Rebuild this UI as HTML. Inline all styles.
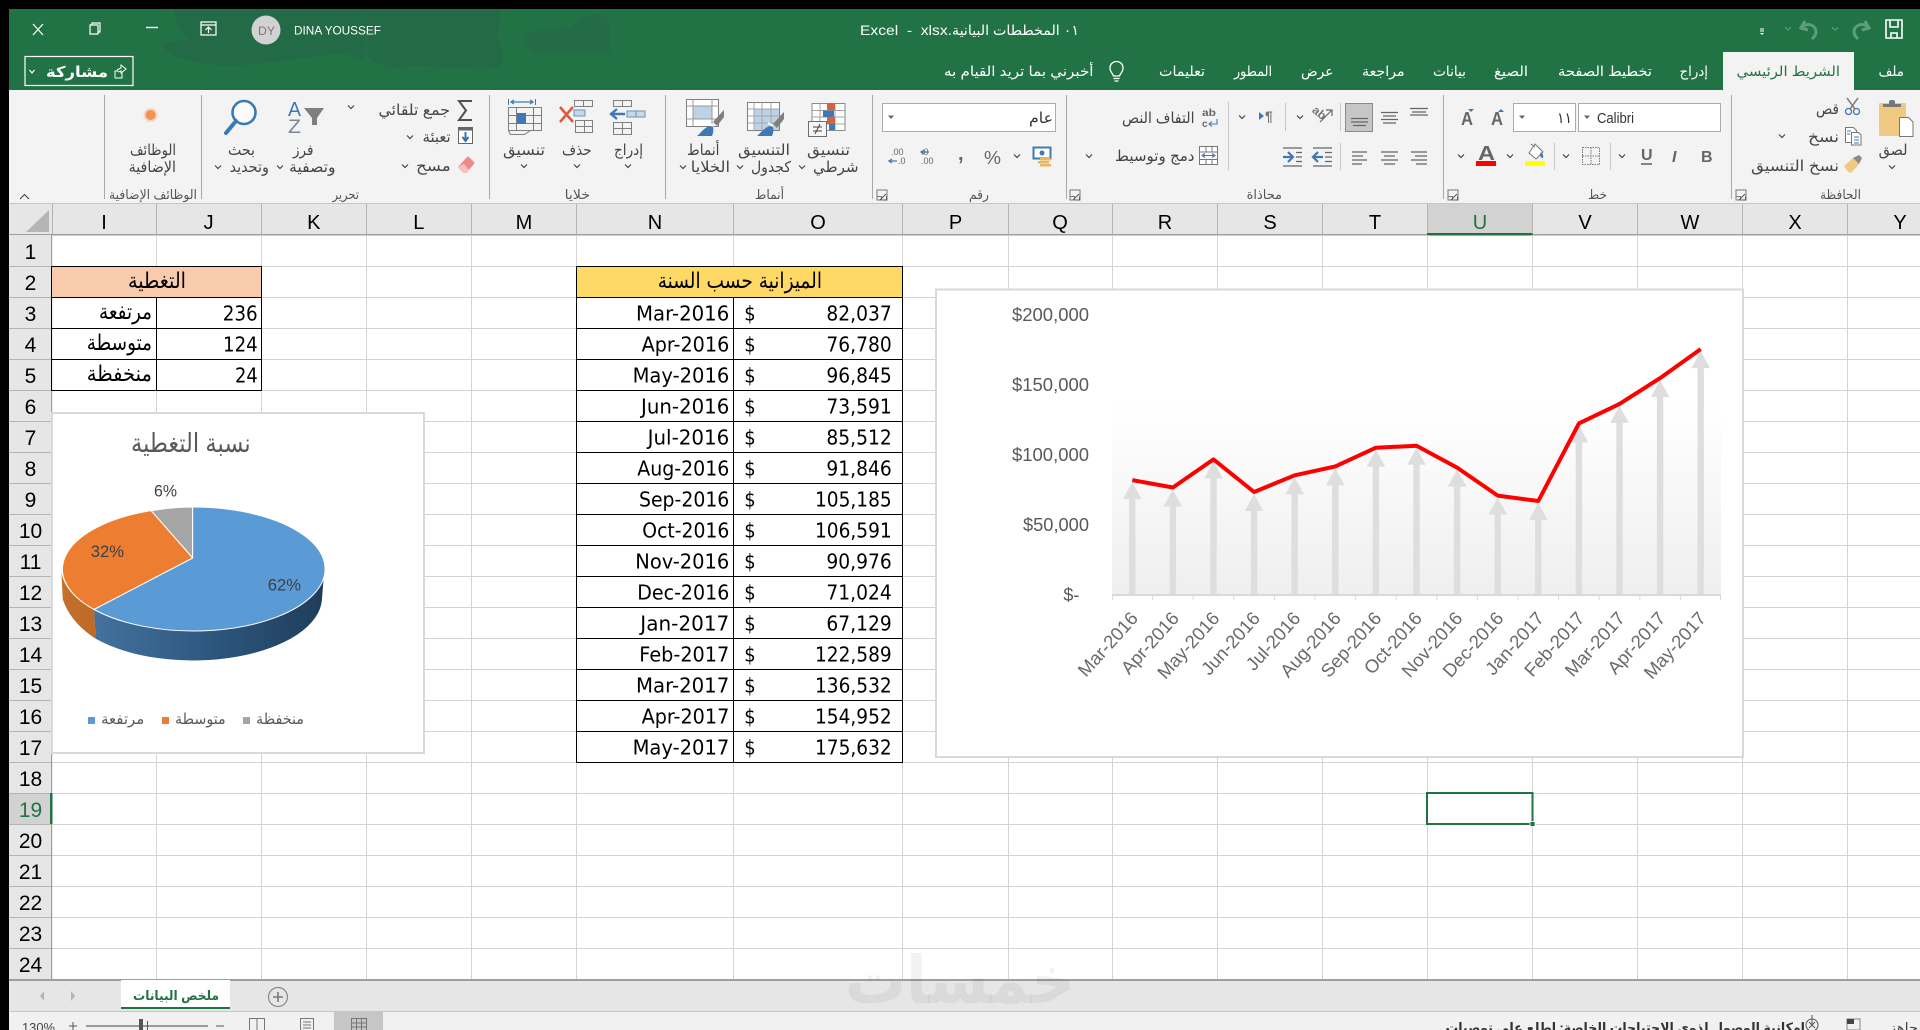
<!DOCTYPE html>
<html><head><meta charset="utf-8"><title>Excel</title>
<style>
html,body{margin:0;padding:0;background:#000;overflow:hidden}
svg{display:block}
text{font-family:"Liberation Sans","DejaVu Sans",sans-serif}
.u{font-size:15px;fill:#444}
.w{font-size:14px;fill:#fff}
.g{font-size:13px;fill:#555}
.c{font-family:"DejaVu Sans",sans-serif;font-size:20px;fill:#000}
.ca{font-family:"DejaVu Sans",sans-serif;font-size:22px;fill:#000}
.h{font-size:20px;fill:#000;text-anchor:middle}
.r{font-size:21px;fill:#000;text-anchor:middle}
.a{font-size:18px;fill:#595959}
.x{font-size:18.500px;fill:#6a6a6a;text-anchor:end}
.l{font-size:15px;fill:#595959}
.p{font-size:17px;fill:#404040}
</style></head><body>
<svg xmlns="http://www.w3.org/2000/svg" width="1920" height="1030" viewBox="0 0 1920 1030">
<defs>
<path id="v" d="M-3-1.500 0 1.500 3-1.500" fill="none" stroke="#444" stroke-width="1.200"/>
<path id="t" d="M-3-1.500H3L0 2Z" fill="#666"/>
<g id="d"><path d="M-5-5h10v10h-10zM-5 1.500H-0.500V5" fill="none" stroke="#777" stroke-width="1"/><path d="M-2 5 4 -1M1 5h3.500v-3.500" fill="none" stroke="#555" stroke-width="1"/></g>
<linearGradient id="bg" x1="0" y1="0" x2="0" y2="1"><stop offset="0" stop-color="#fff"/><stop offset="1" stop-color="#efefef"/></linearGradient>
<linearGradient id="wl" x1="0" y1="0" x2="1" y2="0"><stop offset="0" stop-color="#44729d"/><stop offset=".45" stop-color="#2f5a82"/><stop offset="1" stop-color="#1f3d5a"/></linearGradient>
<linearGradient id="wo" x1="0" y1="0" x2="1" y2="0"><stop offset="0" stop-color="#c4702c"/><stop offset="1" stop-color="#bf6a25"/></linearGradient>
</defs>
<rect width="1920" height="1030" fill="#000"/>
<!-- title bar -->
<rect x="9" y="9" width="1911" height="81" fill="#217346"/>
<path d="M173 9C176 24 182 34 190 40 180 41 168 41 163 45 166 56 190 63 225 66 270 64 310 56 340 54 352 54 360 58 364 62L366 40 365 9ZM365 9 368 58 390 69C420 62 470 72 495 68 502 66 504 60 503 56L498 40 500 9Z" fill="#236a46"/>
<path d="M524 36C530 26 560 30 570 28 578 14 602 8 610 22 612 34 608 42 610 54 590 50 560 52 540 54 530 50 524 44 524 36Z" fill="#246b48"/>
<path d="M33 24 43 35M43 24 33 35" stroke="#fff" stroke-width="1.200" fill="none"/>
<path d="M90 25h8v9h-8zM92 25v-2h8v9h-2" stroke="#fff" stroke-width="1.200" fill="none"/>
<path d="M146 27.500h12" stroke="#fff" stroke-width="1.400"/>
<path d="M201 22h15v13h-15zM201 25h15M208.500 33v-6M205.500 30l3-3 3 3" stroke="#fff" stroke-width="1.200" fill="none"/>
<circle cx="266" cy="30" r="14.500" fill="#d2d2d2"/>
<text x="258" y="35" font-size="12" fill="#777" textLength="17" lengthAdjust="spacingAndGlyphs">DY</text>
<text x="294" y="34.500" font-size="12" fill="#fff" textLength="87" lengthAdjust="spacingAndGlyphs">DINA YOUSSEF</text>
<text x="860" y="35" class="w" textLength="92" lengthAdjust="spacingAndGlyphs" xml:space="preserve">Excel  -  xlsx.</text>
<text x="952" y="35" class="w" textLength="127" lengthAdjust="spacingAndGlyphs" direction="rtl" text-anchor="end">٠١ المخططات البيانية</text>
<path d="M1760 29h4M1760 31h4" stroke="#fff" stroke-width="1"/><path d="M1760 33h4l-2 2z" fill="#fff"/>
<path d="M1785 27l3 3 3-3" fill="none" stroke="#5c9e7c" stroke-width="1.200"/>
<path d="M1805 21l-4 7 7 2M1802 27c5-5 14-2 14 5 0 3-2 5-4 7" fill="none" stroke="#5c9e7c" stroke-width="3"/>
<path d="M1832 27.500l3 2.500 3-2.500" fill="none" stroke="#5c9e7c" stroke-width="1.200"/>
<path d="M1865 21l4 7-7 2M1868 27c-5-5-14-2-14 5 0 3 2 5 4 7" fill="none" stroke="#5c9e7c" stroke-width="3"/>
<path d="M1886 20h16v18h-16zM1890 20v7h8v-7M1891 38v-5h6v5" fill="none" stroke="#fff" stroke-width="1.600"/>
<!-- tabs -->
<rect x="1723" y="52" width="131" height="38" fill="#f3f3f3"/>
<text x="1878.500" y="76" class="w" textLength="25.500" lengthAdjust="spacingAndGlyphs">ملف</text>
<text x="1736.500" y="76" font-size="14" fill="#217346" textLength="103.500" lengthAdjust="spacingAndGlyphs">الشريط الرئيسي</text>
<text x="1679.500" y="76" class="w" textLength="28.500" lengthAdjust="spacingAndGlyphs">إدراج</text>
<text x="1558" y="76" class="w" textLength="94" lengthAdjust="spacingAndGlyphs">تخطيط الصفحة</text>
<text x="1494" y="76" class="w" textLength="34" lengthAdjust="spacingAndGlyphs">الصيغ</text>
<text x="1433" y="76" class="w" textLength="33" lengthAdjust="spacingAndGlyphs">بيانات</text>
<text x="1362" y="76" class="w" textLength="42.600" lengthAdjust="spacingAndGlyphs">مراجعة</text>
<text x="1301" y="76" class="w" textLength="32.500" lengthAdjust="spacingAndGlyphs">عرض</text>
<text x="1234" y="76" class="w" textLength="38" lengthAdjust="spacingAndGlyphs">المطور</text>
<text x="1159" y="76" class="w" textLength="46" lengthAdjust="spacingAndGlyphs">تعليمات</text>
<path d="M1113.500 76c-1-3-3.500-4-3.500-8 0-4 3-6.500 6.500-6.500s6.500 2.500 6.500 6.500c0 4-2.500 5-3.500 8zM1113.500 78.500h6M1114.500 81h4" fill="none" stroke="#fff" stroke-width="1.300"/>
<text x="944" y="76" class="w" textLength="149.500" lengthAdjust="spacingAndGlyphs">أخبرني بما تريد القيام به</text>
<rect x="25" y="56.500" width="108" height="29" fill="none" stroke="#fff" stroke-width="1.200"/>
<path d="M29.500 70l2.500 3 2.500-3" fill="none" stroke="#fff" stroke-width="1.200"/>
<text x="46" y="77" font-size="15" font-weight="bold" fill="#fff" textLength="62" lengthAdjust="spacingAndGlyphs">مشاركة</text>
<path d="M115 78v-7h3M122 72v6h-7M117 70l4-2v-3l5 4-5 4v-2l-3 1" fill="none" stroke="#fff" stroke-width="1"/>
<!-- ribbon -->
<rect x="9" y="90" width="1911" height="114" fill="#f3f3f3"/>
<rect x="9" y="203" width="1911" height="1" fill="#c6c6c6"/>
<path d="M104.500 95V199M201.500 95V199M489.500 95V199M665.500 95V199M872.500 95V199M1066.500 95V199M1443.500 95V199M1731.500 95V199" stroke="#a8a8a8" stroke-width="1"/>
<path d="M20 199l4.500-4.500 4.500 4.500" fill="none" stroke="#444" stroke-width="1.100"/>
<!-- group labels -->
<g>
<text x="109" y="199" class="g" textLength="88" lengthAdjust="spacingAndGlyphs">الوظائف الإضافية</text>
<text x="332.500" y="199" class="g" textLength="26.500" lengthAdjust="spacingAndGlyphs">تحرير</text>
<text x="564.600" y="199" class="g" textLength="25.400" lengthAdjust="spacingAndGlyphs">خلايا</text>
<text x="755" y="199" class="g" textLength="29" lengthAdjust="spacingAndGlyphs">أنماط</text>
<text x="969" y="199" class="g" textLength="20" lengthAdjust="spacingAndGlyphs">رقم</text>
<text x="1246.600" y="199" class="g" textLength="35.400" lengthAdjust="spacingAndGlyphs">محاذاة</text>
<text x="1588" y="199" class="g" textLength="19" lengthAdjust="spacingAndGlyphs">خط</text>
<text x="1820" y="199" class="g" textLength="41" lengthAdjust="spacingAndGlyphs">الحافظة</text>
</g>
<use href="#d" x="882" y="195"/><use href="#d" x="1075" y="195"/><use href="#d" x="1453" y="195"/><use href="#d" x="1741" y="195"/>
<!-- add-ins -->
<circle cx="150.600" cy="115" r="5" fill="#ed7d31"/><circle cx="150.600" cy="115" r="7" fill="#f4b183" opacity=".45"/>
<text x="130" y="155" class="u" textLength="46" lengthAdjust="spacingAndGlyphs">الوظائف</text>
<text x="128.600" y="172" class="u" textLength="47.400" lengthAdjust="spacingAndGlyphs">الإضافية</text>
<!-- editing -->
<circle cx="244" cy="112.500" r="11.500" fill="#fbfbfb" stroke="#3a7ab4" stroke-width="2.600"/>
<path d="M236 121 226 133" stroke="#3a7ab4" stroke-width="4" stroke-linecap="round"/>
<text x="228" y="155" class="u" textLength="27" lengthAdjust="spacingAndGlyphs">بحث</text>
<text x="229.600" y="172" class="u" textLength="39.400" lengthAdjust="spacingAndGlyphs">وتحديد</text>
<use href="#v" x="218" y="167"/>
<text x="288" y="116" font-size="20" fill="#3a7ab4" textLength="13" lengthAdjust="spacingAndGlyphs">A</text>
<text x="288" y="133" font-size="19" fill="#7a8793" textLength="13" lengthAdjust="spacingAndGlyphs">Z</text>
<path d="M304 108h20l-7 10v7h-5v-7z" fill="#7f7f7f"/>
<text x="293" y="155" class="u" textLength="20.500" lengthAdjust="spacingAndGlyphs">فرز</text>
<text x="289" y="172" class="u" textLength="46.600" lengthAdjust="spacingAndGlyphs">وتصفية</text>
<use href="#v" x="280" y="167"/>
<use href="#v" x="351" y="107"/>
<text x="378.500" y="115" class="u" textLength="71.500" lengthAdjust="spacingAndGlyphs">جمع تلقائي</text>
<path d="M472 101H459L466 110.500 459 120H472" fill="none" stroke="#505050" stroke-width="2"/>
<use href="#v" x="410" y="137"/>
<text x="422.500" y="142" class="u" textLength="28.200" lengthAdjust="spacingAndGlyphs">تعبئة</text>
<rect x="458.500" y="127.500" width="14" height="16" fill="#fff" stroke="#666"/><rect x="458.500" y="127.500" width="14" height="3" fill="#666"/><path d="M465.500 132v8M462.500 137l3 4 3-4" fill="none" stroke="#2e75b6" stroke-width="2"/>
<use href="#v" x="405" y="166"/>
<text x="416" y="171" class="u" textLength="34.700" lengthAdjust="spacingAndGlyphs">مسح</text>
<path d="M458 167l9-10q1-1 2 0l5 5q1 1 0 2l-7 8h-5z" fill="#f08a8a"/><path d="M458 167l5 6h4l2-3-5-6z" fill="#f7c0c0"/>
<!-- format cells icon -->
<g fill="none" stroke="#7f7f7f" stroke-width="1">
<path d="M508.500 107.500h33v23h-33zM508.500 115.500h33M508.500 123.500h33M516.500 107.500v23M533.500 107.500v23"/>
<path d="M508.500 130.500l2 4h14l6-4"/>
</g>
<rect x="517" y="113" width="9" height="11" fill="#3f79b5"/>
<path d="M508.500 99v6M535.500 99v6" stroke="#3f79b5"/><path d="M511 102h22M514 100l-3 2 3 2M530 100l3 2-3 2" fill="none" stroke="#3f79b5" stroke-width="1.300"/>
<text x="503" y="155" class="u" textLength="42" lengthAdjust="spacingAndGlyphs">تنسيق</text>
<use href="#v" x="524" y="166"/>
<!-- delete -->
<g fill="none" stroke="#7f7f7f"><path d="M574.500 100.500h18v6h-18zM583.500 100.500v6"/><path d="M575.500 120.500h17v12h-17zM575.500 126.500h17M584.500 120.500v12"/></g>
<rect x="574" y="110" width="11" height="6" fill="#c5d9ea" stroke="#6e93b5"/>
<path d="M560 107l13 15M573 107l-13 15" stroke="#dc5a3c" stroke-width="2.500"/>
<text x="562" y="155" class="u" textLength="29.600" lengthAdjust="spacingAndGlyphs">حذف</text>
<use href="#v" x="577" y="166"/>
<!-- insert -->
<g fill="none" stroke="#7f7f7f"><path d="M613.500 100.500h18v6h-18zM622.500 100.500v6"/><path d="M613.500 122.500h18v12h-18zM613.500 128.500h18M622.500 122.500v12"/></g>
<rect x="627" y="111" width="18" height="6" fill="#c5d9ea" stroke="#6e93b5"/><path d="M636 111v6" stroke="#6e93b5"/>
<path d="M625 114h-12M617 109l-6 5 6 5" fill="none" stroke="#3f79b5" stroke-width="2.400"/>
<text x="614" y="155" class="u" textLength="29" lengthAdjust="spacingAndGlyphs">إدراج</text>
<use href="#v" x="628" y="166"/>
<!-- cell styles -->
<rect x="686.500" y="99.500" width="32" height="27" fill="#fff" stroke="#7f7f7f"/>
<rect x="693" y="106" width="19" height="13" fill="#bdd2e6"/>
<path d="M686.500 106h32M686.500 119h32M693 99.500v27M712 99.500v27" stroke="#999" fill="none"/>
<path d="M713 122l9-10 2-2v7l-7 9z" fill="#7f7f7f"/><path d="M697 136c3-2 8-10 14-10 3 0 3 5 1 10z" fill="#3f79b5"/><path d="M708 123l5 3" stroke="#fff" stroke-width="2"/>
<text x="687" y="155" class="u" textLength="32.500" lengthAdjust="spacingAndGlyphs">أنماط</text>
<text x="690.800" y="172" class="u" textLength="39.200" lengthAdjust="spacingAndGlyphs">الخلايا</text>
<use href="#v" x="683" y="167"/>
<!-- table -->
<rect x="747.500" y="102.500" width="32" height="28" fill="#fff" stroke="#7f7f7f"/>
<rect x="754" y="109" width="25" height="21" fill="#bdd2e6"/>
<path d="M747.500 109h32M747.500 116h32M747.500 123h32M754 102.500v28M762 102.500v28M771 102.500v28" stroke="#a5a5a5" fill="none"/>
<path d="M773 124l9-10 2-2v7l-7 9z" fill="#7f7f7f"/><path d="M757 136c3-2 8-10 14-10 3 0 3 5 1 10z" fill="#3f79b5"/><path d="M768 123l5 3" stroke="#fff" stroke-width="2"/>
<text x="738" y="155" class="u" textLength="52" lengthAdjust="spacingAndGlyphs">التنسيق</text>
<text x="751" y="172" class="u" textLength="40" lengthAdjust="spacingAndGlyphs">كجدول</text>
<use href="#v" x="740" y="167"/>
<!-- conditional -->
<rect x="812" y="103.500" width="33" height="27" fill="#fff" stroke="#8a8a8a"/>
<path d="M812 110.500h33M812 117h33M812 124h33M820 103.500v27M835 103.500v27" stroke="#a5a5a5" fill="none"/>
<rect x="827" y="103" width="8" height="7" fill="#d9623a"/><rect x="823" y="110.500" width="11" height="6.500" fill="#3f79b5"/><rect x="827" y="117" width="8" height="7" fill="#d9623a"/><rect x="829" y="124" width="6" height="6" fill="#3f79b5"/>
<rect x="808.500" y="121.500" width="18" height="15" fill="#f6f6f6" stroke="#6e6e6e"/>
<path d="M813 127h9M813 131h9M820 124l-5 10" stroke="#444" fill="none"/>
<text x="807" y="155" class="u" textLength="43" lengthAdjust="spacingAndGlyphs">تنسيق</text>
<text x="813" y="172" class="u" textLength="45.600" lengthAdjust="spacingAndGlyphs">شرطي</text>
<use href="#v" x="802" y="167"/>
<!-- number -->
<rect x="882.500" y="103.500" width="173" height="28" fill="#fff" stroke="#ababab"/>
<use href="#t" x="891" y="117"/>
<text x="1029" y="123" font-size="15" fill="#333" textLength="24" lengthAdjust="spacingAndGlyphs">عام</text>
<text x="891" y="155" font-size="9" fill="#666">.00</text><text x="898" y="164" font-size="9" fill="#666">.0</text>
<path d="M897 161h-8M892 159l-3 2 3 2" fill="none" stroke="#3f79b5" stroke-width="1.300"/>
<text x="921" y="155" font-size="9" fill="#666">.0</text><text x="921" y="164" font-size="9" fill="#666">.00</text>
<path d="M929 152h-8M924 150l-3 2 3 2" fill="none" stroke="#3f79b5" stroke-width="1.300"/>
<text x="958" y="160" font-size="20" font-weight="bold" fill="#666">,</text>
<text x="984" y="164" font-size="18" fill="#666" textLength="17" lengthAdjust="spacingAndGlyphs">%</text>
<use href="#v" x="1017" y="156"/>
<rect x="1033.500" y="147.500" width="17" height="11" fill="#fff" stroke="#3f79b5" stroke-width="2"/>
<circle cx="1042" cy="153" r="2.500" fill="#3f79b5"/>
<path d="M1040 158h11v2.500h-11zM1038 161h11v2.500h-11zM1040 164h11v2.500h-11z" fill="#e8b465"/>
<!-- alignment -->
<text x="1122" y="123" font-size="15" fill="#444" textLength="72.500" lengthAdjust="spacingAndGlyphs">التفاف النص</text>
<text x="1202" y="116" font-size="10" font-weight="bold" fill="#666" textLength="14" lengthAdjust="spacingAndGlyphs">ab</text>
<text x="1202" y="127" font-size="10" font-weight="bold" fill="#666">c</text>
<path d="M1217 119v5h-8M1212 121.500l-3 2.500 3 2.500" fill="none" stroke="#3f79b5" stroke-width="1.100"/>
<path d="M1228.500 102V170M1285.500 103V131M1340.500 103V131M1340.500 143V170" stroke="#c8c8c8"/>
<use href="#v" x="1242" y="117"/>
<path d="M1259 112v8l5-4z" fill="#3f79b5"/>
<text x="1265" y="121" font-size="14" font-weight="bold" fill="#777">¶</text>
<use href="#v" x="1300" y="117"/>
<text x="1313" y="117" font-size="12" font-weight="bold" fill="#777" transform="rotate(40 1320 112)">ab</text>
<path d="M1320 122l11-11M1326 110h6v6" fill="none" stroke="#666" stroke-width="1.200"/>
<rect x="1345.500" y="103.500" width="27" height="28" fill="#c6c6c6" stroke="#8a8a8a"/>
<g stroke="#666" stroke-width="1.200" fill="none">
<path d="M1351 118.500h17M1351 122h17M1353 125.500h13"/>
<path d="M1381 112.500h17M1383 116h13M1381 119.500h17M1383 123h13"/>
<path d="M1410 108.500h18M1412 112h14M1410 115h18"/>
<path d="M1352 152h15M1352 156h11M1352 160h15M1352 164h10"/>
<path d="M1381 152h17M1384 156h11M1381 160h17M1384 164h11"/>
<path d="M1411 152h16M1415 156h12M1411 160h16M1416 164h11"/>
<path d="M1283 148h19M1296 152.500h6M1296 157h6M1296 161.500h6M1283 166h19"/>
<path d="M1313 148h19M1325 152.500h7M1325 157h7M1325 161.500h7M1313 166h19"/>
</g>
<path d="M1283 157h9M1288 152l5 5-5 5" fill="none" stroke="#3f79b5" stroke-width="2.200"/>
<path d="M1323 157h-9M1318 152l-5 5 5 5" fill="none" stroke="#3f79b5" stroke-width="2.200"/>
<text x="1115" y="161" font-size="15" fill="#444" textLength="79.500" lengthAdjust="spacingAndGlyphs">دمج وتوسيط</text>
<rect x="1199.500" y="146.500" width="18" height="18" fill="#fff" stroke="#777"/>
<path d="M1199.500 152h18M1199.500 159.500h18M1206 146.500v5.500M1212 146.500v5.500M1206 159.500v5M1212 159.500v5" stroke="#777" fill="none"/>
<path d="M1202 155.500h13M1205 153.500l-3 2 3 2M1212 153.500l3 2-3 2" fill="none" stroke="#3f79b5" stroke-width="1.100"/>
<use href="#v" x="1089" y="156"/>
<!-- font -->
<text x="1461" y="125" font-size="18" font-weight="bold" fill="#666" textLength="12" lengthAdjust="spacingAndGlyphs">A</text>
<path d="M1468 109h6l-3 3z" fill="#3f79b5"/>
<text x="1491" y="125" font-size="18" font-weight="bold" fill="#666" textLength="12" lengthAdjust="spacingAndGlyphs">A</text>
<path d="M1498 112h6l-3-3z" fill="#3f79b5"/>
<rect x="1513.500" y="103.500" width="62" height="28" fill="#fff" stroke="#ababab"/>
<use href="#t" x="1522" y="117"/>
<text x="1557" y="123" font-size="15" fill="#333" textLength="15" lengthAdjust="spacingAndGlyphs">١١</text>
<rect x="1578.500" y="103.500" width="142" height="28" fill="#fff" stroke="#ababab"/>
<use href="#t" x="1587" y="117"/>
<text x="1597" y="123" font-size="15" fill="#333" textLength="37" lengthAdjust="spacingAndGlyphs">Calibri</text>
<text x="1701" y="162" font-size="16" font-weight="bold" fill="#666">B</text>
<text x="1672" y="162" font-size="16" font-weight="bold" font-style="italic" fill="#666">I</text>
<text x="1641" y="160" font-size="16" font-weight="bold" fill="#666">U</text><path d="M1641 164h11" stroke="#666" stroke-width="1.600"/>
<use href="#v" x="1622" y="156"/>
<path d="M1610.500 143V170M1554.500 143V170" stroke="#c8c8c8"/>
<path d="M1582.500 147.500h17v17h-17zM1591 147.500v17M1582.500 156h17" fill="none" stroke="#777" stroke-dasharray="1.500 1"/>
<use href="#v" x="1566" y="156"/>
<path d="M1535 144l8 8-7 7-7-6zM1531 144l4 3" fill="#fff" stroke="#777"/><path d="M1541 152q3 3 2 6-3 0-3-4z" fill="#3f79b5"/>
<rect x="1525" y="161" width="20" height="5" fill="#ffff00"/>
<use href="#v" x="1510" y="156"/>
<text x="1478" y="160" font-size="20" font-weight="bold" fill="#666" textLength="17" lengthAdjust="spacingAndGlyphs">A</text>
<rect x="1476" y="161" width="20" height="5" fill="#ff0000"/>
<use href="#v" x="1461" y="156"/>
<!-- clipboard -->
<rect x="1879" y="103" width="27" height="33" rx="1.500" fill="#efc982"/>
<path d="M1883 106v-2h6v-2.500q0-1.500 3-1.500t3 1.500v2.500h6v3h-18z" fill="#777"/>
<path d="M1899.500 117.500h9l4.500 4.500v14.500h-13.500z" fill="#fff" stroke="#777"/>
<text x="1878.600" y="155" class="u" textLength="29" lengthAdjust="spacingAndGlyphs">لصق</text>
<use href="#v" x="1892" y="167"/>
<circle cx="1848.500" cy="111.500" r="3" fill="none" stroke="#3f79b5" stroke-width="1.300"/><circle cx="1856.500" cy="111.500" r="3" fill="none" stroke="#3f79b5" stroke-width="1.300"/>
<path d="M1850 109 1858 98M1855 109 1847 98" stroke="#7f7f7f" stroke-width="1.500"/>
<text x="1816" y="114" class="u" textLength="23" lengthAdjust="spacingAndGlyphs">قص</text>
<path d="M1845.500 127.500h8l3 3v12h-11z" fill="#fff" stroke="#777"/><path d="M1851.500 132.500h7l2.500 2.500v10h-9.500z" fill="#fff" stroke="#777"/><path d="M1847 131h4M1847 134h3M1854 137h5M1854 140h5M1854 143h5" stroke="#3f79b5"/>
<text x="1808" y="142" class="u" textLength="31" lengthAdjust="spacingAndGlyphs">نسخ</text>
<use href="#v" x="1782" y="136"/>
<path d="M1844 166l9-8 6 6-8 9q-3 0-7-7z" fill="#efc982"/><path d="M1853 158l6-3 3 3-3 6z" fill="#8a8a8a"/>
<text x="1751" y="171" class="u" textLength="88" lengthAdjust="spacingAndGlyphs">نسخ التنسيق</text>
<!-- col header -->
<rect x="9" y="204" width="1911" height="31" fill="#e6e6e6"/>
<rect x="1427" y="204" width="105.500" height="31" fill="#d2d2d2"/>
<path d="M49 210V232H26Z" fill="#b5b5b5"/>
<path d="M52.500 204V235M156.500 204V235M261.500 204V235M366.500 204V235M471.500 204V235M576.500 204V235M733.500 204V235M902.500 204V235M1008.500 204V235M1112.500 204V235M1217.500 204V235M1322.500 204V235M1427.500 204V235M1532.500 204V235M1637.500 204V235M1742.500 204V235M1847.500 204V235" stroke="#b4b4b4"/>
<rect x="9" y="234" width="1911" height="1.500" fill="#9e9e9e"/>
<rect x="1427" y="233" width="105.500" height="2.500" fill="#217346"/>
<g>
<text x="104" y="229" class="h">I</text><text x="208.600" y="229" class="h">J</text><text x="313.800" y="229" class="h">K</text><text x="418.800" y="229" class="h">L</text><text x="524" y="229" class="h">M</text><text x="655" y="229" class="h">N</text><text x="818" y="229" class="h">O</text><text x="955.500" y="229" class="h">P</text><text x="1060" y="229" class="h">Q</text><text x="1165" y="229" class="h">R</text><text x="1270" y="229" class="h">S</text><text x="1375" y="229" class="h">T</text><text x="1480" y="229" class="h" style="fill:#217346">U</text><text x="1585" y="229" class="h">V</text><text x="1690" y="229" class="h">W</text><text x="1795" y="229" class="h">X</text><text x="1900" y="229" class="h">Y</text>
</g>
<!-- grid -->
<rect x="52" y="235.500" width="1868" height="744" fill="#fff"/>
<path d="M52 266.500H1920M52 297.500H1920M52 328.500H1920M52 359.500H1920M52 390.500H1920M52 421.500H1920M52 452.500H1920M52 483.500H1920M52 514.500H1920M52 545.500H1920M52 576.500H1920M52 607.500H1920M52 638.500H1920M52 669.500H1920M52 700.500H1920M52 731.500H1920M52 762.500H1920M52 793.500H1920M52 824.500H1920M52 855.500H1920M52 886.500H1920M52 917.500H1920M52 948.500H1920
M156.500 235V979M261.500 235V979M366.500 235V979M471.500 235V979M576.500 235V979M733.500 235V979M902.500 235V979M1008.500 235V979M1112.500 235V979M1217.500 235V979M1322.500 235V979M1427.500 235V979M1532.500 235V979M1637.500 235V979M1742.500 235V979M1847.500 235V979" stroke="#d4d4d4" fill="none"/>
<!-- row header -->
<rect x="9" y="235" width="43" height="744" fill="#e6e6e6"/>
<rect x="9" y="793" width="43" height="31" fill="#d2d2d2"/>
<path d="M9 266.500H52M9 297.500H52M9 328.500H52M9 359.500H52M9 390.500H52M9 421.500H52M9 452.500H52M9 483.500H52M9 514.500H52M9 545.500H52M9 576.500H52M9 607.500H52M9 638.500H52M9 669.500H52M9 700.500H52M9 731.500H52M9 762.500H52M9 793.500H52M9 824.500H52M9 855.500H52M9 886.500H52M9 917.500H52M9 948.500H52" stroke="#b4b4b4"/>
<rect x="51" y="235" width="1.200" height="744" fill="#9e9e9e"/>
<rect x="50" y="793" width="2.500" height="31" fill="#217346"/>
<g>
<text x="30.500" y="259" class="r">1</text><text x="30.500" y="290" class="r">2</text><text x="30.500" y="321" class="r">3</text><text x="30.500" y="352" class="r">4</text><text x="30.500" y="383" class="r">5</text><text x="30.500" y="414" class="r">6</text><text x="30.500" y="445" class="r">7</text><text x="30.500" y="476" class="r">8</text><text x="30.500" y="507" class="r">9</text><text x="30.500" y="538" class="r">10</text><text x="30.500" y="569" class="r">11</text><text x="30.500" y="600" class="r">12</text><text x="30.500" y="631" class="r">13</text><text x="30.500" y="662" class="r">14</text><text x="30.500" y="693" class="r">15</text><text x="30.500" y="724" class="r">16</text><text x="30.500" y="755" class="r">17</text><text x="30.500" y="786" class="r">18</text><text x="30.500" y="817" class="r" style="fill:#217346">19</text><text x="30.500" y="848" class="r">20</text><text x="30.500" y="879" class="r">21</text><text x="30.500" y="910" class="r">22</text><text x="30.500" y="941" class="r">23</text><text x="30.500" y="972" class="r">24</text>
</g>
<!-- table 1 -->
<rect x="52" y="266" width="209.500" height="31" fill="#f8cbad"/>
<path d="M51.500 266.500H261.500V390.500H51.500ZM51.500 297.500H261.500M51.500 328.500H261.500M51.500 359.500H261.500M156.500 297.500V390.500" fill="none" stroke="#000"/>
<text x="128" y="288" class="ca" textLength="58" lengthAdjust="spacingAndGlyphs">التغطية</text>
<text x="99" y="319" class="ca" textLength="53" lengthAdjust="spacingAndGlyphs">مرتفعة</text>
<text x="86.700" y="350" class="ca" textLength="65.300" lengthAdjust="spacingAndGlyphs">متوسطة</text>
<text x="86.700" y="381" class="ca" textLength="65.300" lengthAdjust="spacingAndGlyphs">منخفظة</text>
<text x="222.700" y="320.500" class="c" textLength="35" lengthAdjust="spacingAndGlyphs">236</text>
<text x="223" y="351.500" class="c" textLength="34.700" lengthAdjust="spacingAndGlyphs">124</text>
<text x="235" y="382.500" class="c" textLength="22.700" lengthAdjust="spacingAndGlyphs">24</text>
<!-- table 2 -->
<rect x="577" y="266" width="325.500" height="31" fill="#ffd966"/>
<path d="M576.500 266.500H902.500V762.500H576.500ZM576.500 297.500H902.500M576.500 328.500H902.500M576.500 359.500H902.500M576.500 390.500H902.500M576.500 421.500H902.500M576.500 452.500H902.500M576.500 483.500H902.500M576.500 514.500H902.500M576.500 545.500H902.500M576.500 576.500H902.500M576.500 607.500H902.500M576.500 638.500H902.500M576.500 669.500H902.500M576.500 700.500H902.500M576.500 731.500H902.500M733.500 297.500V762.500" fill="none" stroke="#000"/>
<text x="657.700" y="288" class="ca" textLength="164.300" lengthAdjust="spacingAndGlyphs">الميزانية حسب السنة</text>
<g>
<text x="636" y="320.500" class="c" textLength="93.300" lengthAdjust="spacingAndGlyphs">Mar-2016</text>
<text x="641.600" y="351.500" class="c" textLength="87.700" lengthAdjust="spacingAndGlyphs">Apr-2016</text>
<text x="632.600" y="382.500" class="c" textLength="96.700" lengthAdjust="spacingAndGlyphs">May-2016</text>
<text x="641" y="413.500" class="c" textLength="88.300" lengthAdjust="spacingAndGlyphs">Jun-2016</text>
<text x="647.600" y="444.500" class="c" textLength="81.700" lengthAdjust="spacingAndGlyphs">Jul-2016</text>
<text x="637.300" y="475.500" class="c" textLength="92" lengthAdjust="spacingAndGlyphs">Aug-2016</text>
<text x="639" y="506.500" class="c" textLength="90.300" lengthAdjust="spacingAndGlyphs">Sep-2016</text>
<text x="642.300" y="537.500" class="c" textLength="87" lengthAdjust="spacingAndGlyphs">Oct-2016</text>
<text x="635.300" y="568.500" class="c" textLength="94" lengthAdjust="spacingAndGlyphs">Nov-2016</text>
<text x="637.300" y="599.500" class="c" textLength="92" lengthAdjust="spacingAndGlyphs">Dec-2016</text>
<text x="640.300" y="630.500" class="c" textLength="89" lengthAdjust="spacingAndGlyphs">Jan-2017</text>
<text x="639.300" y="661.500" class="c" textLength="90" lengthAdjust="spacingAndGlyphs">Feb-2017</text>
<text x="636" y="692.500" class="c" textLength="93.300" lengthAdjust="spacingAndGlyphs">Mar-2017</text>
<text x="641.600" y="723.500" class="c" textLength="87.700" lengthAdjust="spacingAndGlyphs">Apr-2017</text>
<text x="632.600" y="754.500" class="c" textLength="96.700" lengthAdjust="spacingAndGlyphs">May-2017</text>
</g>
<g>
<text x="744.300" y="320.500" class="c" textLength="11.400" lengthAdjust="spacingAndGlyphs">$</text><text x="744.300" y="351.500" class="c" textLength="11.400" lengthAdjust="spacingAndGlyphs">$</text><text x="744.300" y="382.500" class="c" textLength="11.400" lengthAdjust="spacingAndGlyphs">$</text><text x="744.300" y="413.500" class="c" textLength="11.400" lengthAdjust="spacingAndGlyphs">$</text><text x="744.300" y="444.500" class="c" textLength="11.400" lengthAdjust="spacingAndGlyphs">$</text><text x="744.300" y="475.500" class="c" textLength="11.400" lengthAdjust="spacingAndGlyphs">$</text><text x="744.300" y="506.500" class="c" textLength="11.400" lengthAdjust="spacingAndGlyphs">$</text><text x="744.300" y="537.500" class="c" textLength="11.400" lengthAdjust="spacingAndGlyphs">$</text><text x="744.300" y="568.500" class="c" textLength="11.400" lengthAdjust="spacingAndGlyphs">$</text><text x="744.300" y="599.500" class="c" textLength="11.400" lengthAdjust="spacingAndGlyphs">$</text><text x="744.300" y="630.500" class="c" textLength="11.400" lengthAdjust="spacingAndGlyphs">$</text><text x="744.300" y="661.500" class="c" textLength="11.400" lengthAdjust="spacingAndGlyphs">$</text><text x="744.300" y="692.500" class="c" textLength="11.400" lengthAdjust="spacingAndGlyphs">$</text><text x="744.300" y="723.500" class="c" textLength="11.400" lengthAdjust="spacingAndGlyphs">$</text><text x="744.300" y="754.500" class="c" textLength="11.400" lengthAdjust="spacingAndGlyphs">$</text>
</g>
<g>
<text x="826.400" y="320.500" class="c" textLength="65.300" lengthAdjust="spacingAndGlyphs">82,037</text>
<text x="826.400" y="351.500" class="c" textLength="65.300" lengthAdjust="spacingAndGlyphs">76,780</text>
<text x="826.400" y="382.500" class="c" textLength="65.300" lengthAdjust="spacingAndGlyphs">96,845</text>
<text x="826.400" y="413.500" class="c" textLength="65.300" lengthAdjust="spacingAndGlyphs">73,591</text>
<text x="826.400" y="444.500" class="c" textLength="65.300" lengthAdjust="spacingAndGlyphs">85,512</text>
<text x="826.400" y="475.500" class="c" textLength="65.300" lengthAdjust="spacingAndGlyphs">91,846</text>
<text x="815" y="506.500" class="c" textLength="76.700" lengthAdjust="spacingAndGlyphs">105,185</text>
<text x="815" y="537.500" class="c" textLength="76.700" lengthAdjust="spacingAndGlyphs">106,591</text>
<text x="826.400" y="568.500" class="c" textLength="65.300" lengthAdjust="spacingAndGlyphs">90,976</text>
<text x="826.400" y="599.500" class="c" textLength="65.300" lengthAdjust="spacingAndGlyphs">71,024</text>
<text x="826.400" y="630.500" class="c" textLength="65.300" lengthAdjust="spacingAndGlyphs">67,129</text>
<text x="815" y="661.500" class="c" textLength="76.700" lengthAdjust="spacingAndGlyphs">122,589</text>
<text x="815" y="692.500" class="c" textLength="76.700" lengthAdjust="spacingAndGlyphs">136,532</text>
<text x="815" y="723.500" class="c" textLength="76.700" lengthAdjust="spacingAndGlyphs">154,952</text>
<text x="815" y="754.500" class="c" textLength="76.700" lengthAdjust="spacingAndGlyphs">175,632</text>
</g>
<!-- pie chart -->
<rect x="52" y="413" width="372" height="340" fill="#fff" stroke="#d9d9d9" stroke-width="2"/>
<text x="131" y="452" font-size="26" fill="#595959" textLength="119.700" lengthAdjust="spacingAndGlyphs">نسبة التغطية</text>
<path d="M94 609.500 95.700 638.800A129 63 0 0 0 322 599L324.300 569A131.500 62 0 0 1 94 609.500Z" fill="url(#wl)"/>
<path d="M61.300 569A131.500 62 0 0 0 94 609.500L95.700 638.800Q70 622 62.700 599Z" fill="url(#wo)"/>
<path d="M192.700 558 192.700 507A131.500 62 0 0 0 151 510.600Z" fill="#a5a5a5" stroke="#fff"/>
<path d="M192.700 558 151 510.600A131.500 62 0 0 0 94 609.500Z" fill="#ed7d31" stroke="#fff"/>
<path d="M192.700 558 94 609.500A131.500 62 0 1 0 192.700 507Z" fill="#5b9bd5" stroke="#fff"/>
<text x="154" y="496.500" class="p" textLength="23" lengthAdjust="spacingAndGlyphs">6%</text>
<text x="90.700" y="557" class="p" textLength="33.300" lengthAdjust="spacingAndGlyphs">32%</text>
<text x="267.700" y="590.500" class="p" textLength="33.300" lengthAdjust="spacingAndGlyphs">62%</text>
<rect x="88" y="717" width="7" height="7" fill="#5b9bd5"/>
<rect x="162" y="717" width="7" height="7" fill="#ed7d31"/>
<rect x="243" y="717" width="7" height="7" fill="#a5a5a5"/>
<text x="101" y="724" class="l" textLength="43.300" lengthAdjust="spacingAndGlyphs">مرتفعة</text>
<text x="175" y="724" class="l" textLength="50.700" lengthAdjust="spacingAndGlyphs">متوسطة</text>
<text x="256" y="724" class="l" textLength="48" lengthAdjust="spacingAndGlyphs">منخفظة</text>
<!-- line chart -->
<rect x="936" y="289.500" width="807" height="467.500" fill="#fff" stroke="#d9d9d9" stroke-width="2"/>
<rect x="1112" y="401" width="609" height="194" fill="url(#bg)"/>
<text x="1012" y="321" class="a" textLength="77" lengthAdjust="spacingAndGlyphs">$200,000</text>
<text x="1012" y="391" class="a" textLength="77" lengthAdjust="spacingAndGlyphs">$150,000</text>
<text x="1012" y="461" class="a" textLength="77" lengthAdjust="spacingAndGlyphs">$100,000</text>
<text x="1023" y="531" class="a" textLength="66" lengthAdjust="spacingAndGlyphs">$50,000</text>
<text x="1063.400" y="601" class="a" textLength="16" lengthAdjust="spacingAndGlyphs">$-</text>
<g fill="#dedede">
<path d="M1132.300 482.100l9.300 17h-6.100V595h-6.400V499.100h-6.100z"/>
<path d="M1172.900 489.500l9.300 17h-6.100V595h-6.400V506.500h-6.100z"/>
<path d="M1213.500 461.400l9.300 17h-6.100V595h-6.400V478.400h-6.100z"/>
<path d="M1254.100 494l9.300 17h-6.100V595h-6.400V511h-6.100z"/>
<path d="M1294.700 477.300l9.300 17h-6.100V595h-6.400V494.300h-6.100z"/>
<path d="M1335.300 468.400l9.300 17h-6.100V595h-6.400V485.400h-6.100z"/>
<path d="M1375.900 449.700l9.300 17h-6.100V595h-6.400V466.700h-6.100z"/>
<path d="M1416.500 447.800l9.300 17h-6.100V595h-6.400V464.800h-6.100z"/>
<path d="M1457.100 469.600l9.300 17h-6.100V595h-6.400V486.600h-6.100z"/>
<path d="M1497.700 497.600l9.300 17h-6.100V595h-6.400V514.600h-6.100z"/>
<path d="M1538.300 503l9.300 17h-6.100V595h-6.400V520h-6.100z"/>
<path d="M1578.900 425.400l9.300 17h-6.100V595h-6.400V442.400h-6.100z"/>
<path d="M1619.500 405.900l9.300 17h-6.100V595h-6.400V422.900h-6.100z"/>
<path d="M1660.100 380.100l9.300 17h-6.100V595h-6.400V397.100h-6.100z"/>
<path d="M1700.700 351.100l9.300 17h-6.100V595h-6.400V368.100h-6.100z"/>
</g>
<path d="M1112 595H1721" stroke="#d9d9d9" stroke-width="2"/>
<path d="M1112.500 595V600M1152.600 595V600M1193.200 595V600M1233.800 595V600M1274.400 595V600M1315 595V600M1355.600 595V600M1396.200 595V600M1436.800 595V600M1477.400 595V600M1518 595V600M1558.600 595V600M1599.200 595V600M1639.800 595V600M1680.400 595V600M1720.500 595V600" stroke="#d9d9d9"/>
<polyline points="1132.300,480.100 1172.900,487.500 1213.500,459.400 1254.100,492 1294.700,475.300 1335.300,466.400 1375.900,447.700 1416.500,445.800 1457.100,467.600 1497.700,495.600 1538.300,501 1578.900,423.400 1619.500,403.900 1660.100,378.100 1700.700,349.100" fill="none" stroke="#ff0000" stroke-width="4" stroke-linejoin="round"/>
<g>
<text class="x" transform="translate(1139 619) rotate(-48)">Mar-2016</text>
<text class="x" transform="translate(1180 619) rotate(-48)">Apr-2016</text>
<text class="x" transform="translate(1220.500 619) rotate(-48)">May-2016</text>
<text class="x" transform="translate(1261 619) rotate(-48)">Jun-2016</text>
<text class="x" transform="translate(1301.500 619) rotate(-48)">Jul-2016</text>
<text class="x" transform="translate(1342 619) rotate(-48)">Aug-2016</text>
<text class="x" transform="translate(1382.500 619) rotate(-48)">Sep-2016</text>
<text class="x" transform="translate(1423 619) rotate(-48)">Oct-2016</text>
<text class="x" transform="translate(1463.500 619) rotate(-48)">Nov-2016</text>
<text class="x" transform="translate(1504.500 619) rotate(-48)">Dec-2016</text>
<text class="x" transform="translate(1545 619) rotate(-48)">Jan-2017</text>
<text class="x" transform="translate(1585.500 619) rotate(-48)">Feb-2017</text>
<text class="x" transform="translate(1626 619) rotate(-48)">Mar-2017</text>
<text class="x" transform="translate(1666.500 619) rotate(-48)">Apr-2017</text>
<text class="x" transform="translate(1707 619) rotate(-48)">May-2017</text>
</g>
<!-- selected cell -->
<rect x="1427" y="793" width="105.500" height="31" fill="none" stroke="#217346" stroke-width="2"/>
<rect x="1530" y="821.500" width="5" height="5" fill="#217346" stroke="#fff" stroke-width=".8"/>
<!-- bottom -->
<rect x="9" y="979" width="1911" height="33" fill="#e6e6e6"/>
<rect x="9" y="979" width="1911" height="2" fill="#9e9e9e"/>
<rect x="9" y="1011" width="1911" height="1" fill="#c6c6c6"/>
<rect x="9" y="1012" width="1911" height="18" fill="#f1f1f1"/>
<path d="M44 991l-4 5 4 5zM71 991l4 5-4 5z" fill="#b5b5b5"/>
<rect x="121" y="980" width="109" height="29" fill="#fff"/>
<rect x="121" y="1007" width="109" height="2" fill="#217346"/>
<text x="133" y="1000" font-size="13" font-weight="bold" fill="#217346" textLength="86" lengthAdjust="spacingAndGlyphs">ملخص البيانات</text>
<circle cx="278" cy="997" r="9.500" fill="none" stroke="#8a8a8a" stroke-width="1.200"/>
<path d="M273 997h10M278 992v10" stroke="#7a7a7a" stroke-width="1.600"/>
<text x="845" y="1003" font-size="66" font-weight="bold" fill="#000" fill-opacity=".05" textLength="230" lengthAdjust="spacingAndGlyphs">خمسات</text>
<text x="22" y="1032" font-size="13" fill="#444" textLength="33" lengthAdjust="spacingAndGlyphs">130%</text>
<path d="M69 1026h8M73 1022v8M216 1026h8" stroke="#555" stroke-width="1"/>
<path d="M86 1026H208" stroke="#444" stroke-width="1"/>
<rect x="139" y="1019" width="4" height="11" fill="#555"/><path d="M147.500 1021V1030" stroke="#555"/>
<path d="M249.500 1018.500h15v12h-15zM257 1018.500v12" fill="none" stroke="#777"/>
<path d="M300.500 1018.500h13v12h-13zM303 1022h8M303 1025h8M303 1028h8" fill="none" stroke="#777"/>
<rect x="334" y="1012" width="49" height="18" fill="#c6c6c6"/>
<path d="M351.500 1018.500h15v12h-15zM351.500 1023h15M351.500 1027h15M356.500 1018.500v12M361.500 1018.500v12" fill="none" stroke="#777"/>
<text x="1445.600" y="1032" font-size="13" fill="#333" font-weight="bold" textLength="359.400" lengthAdjust="spacingAndGlyphs">إمكانية الوصول لذوي الاحتياجات الخاصة: إطلع على توصيات</text>
<circle cx="1812" cy="1025" r="6" fill="none" stroke="#555"/><path d="M1809 1022l6 6M1815 1022l-6 6M1812 1015V1025" stroke="#555" fill="none"/>
<rect x="1847" y="1019" width="13" height="11" fill="none" stroke="#888"/><rect x="1847" y="1019" width="7" height="5" fill="#444"/>
<text x="1889" y="1032" font-size="13" fill="#444" textLength="29" lengthAdjust="spacingAndGlyphs">جاهز</text>
</svg>
</body></html>
